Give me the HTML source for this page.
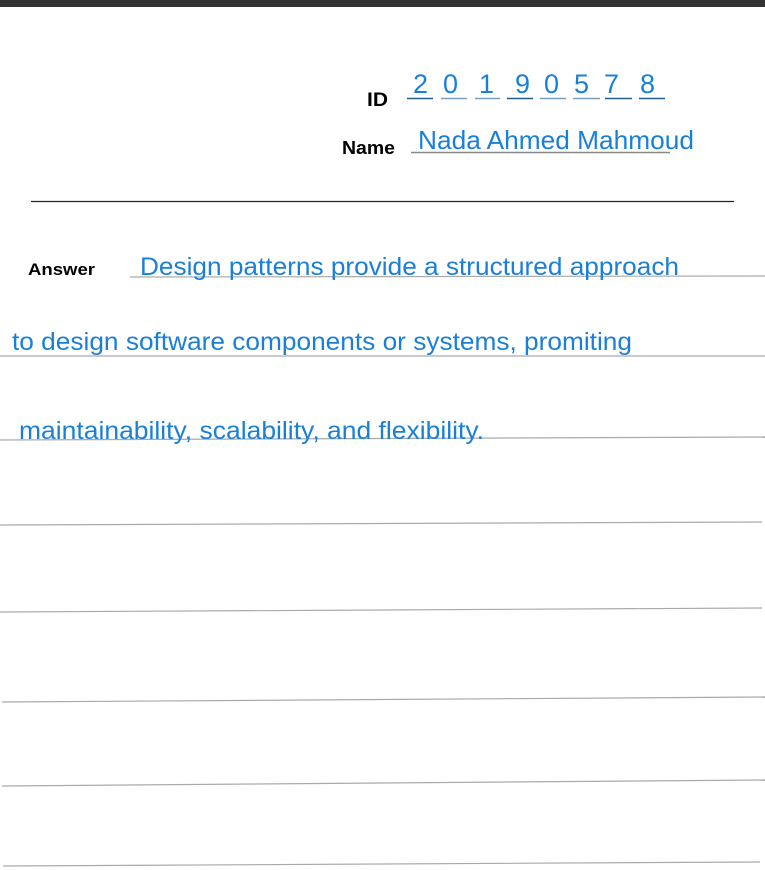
<!DOCTYPE html>
<html><head><meta charset="utf-8"><style>
html,body{margin:0;padding:0;background:#fff;width:765px;height:870px;overflow:hidden}
svg{display:block}
</style></head><body>
<svg width="765" height="870" xmlns="http://www.w3.org/2000/svg" font-family="Liberation Sans, Arial, sans-serif">
<rect x="0" y="0" width="765" height="7" fill="#333"/>
<text x="367" y="106" font-size="19" font-weight="bold" fill="#000" textLength="21" lengthAdjust="spacingAndGlyphs">ID</text>
<g fill="#1a7fd8" font-size="27">
<text x="413" y="93">2</text><text x="443" y="93">0</text><text x="479" y="93">1</text><text x="515" y="93">9</text><text x="544" y="93">0</text><text x="574" y="93">5</text><text x="604" y="93">7</text><text x="640" y="93">8</text>
</g>
<g stroke="#1f5f8a" stroke-width="1.5">
<line x1="407" y1="98.5" x2="433" y2="98.5"/><line x1="441" y1="98.5" x2="467" y2="98.5" stroke="#7aa0b8"/><line x1="475" y1="98.5" x2="500" y2="98.5" stroke="#7aa0b8"/><line x1="507" y1="98.5" x2="533" y2="98.5"/><line x1="540" y1="98.5" x2="566" y2="98.5" stroke="#7aa0b8"/><line x1="573" y1="98.5" x2="600" y2="98.5" stroke="#7aa0b8"/><line x1="605" y1="98.5" x2="632" y2="98.5"/><line x1="639" y1="98.5" x2="665" y2="98.5"/>
</g>
<text x="342" y="154" font-size="18" font-weight="bold" fill="#000" textLength="53" lengthAdjust="spacingAndGlyphs">Name</text>
<line x1="411" y1="152.5" x2="670" y2="152.5" stroke="#888" stroke-width="1.5"/>
<text x="418" y="149" font-size="26" fill="#1a7fd8" textLength="276" lengthAdjust="spacingAndGlyphs">Nada Ahmed Mahmoud</text>
<line x1="31" y1="201.5" x2="734" y2="201.5" stroke="#222" stroke-width="1.2"/>
<text x="28" y="275" font-size="17" font-weight="bold" fill="#000" textLength="67" lengthAdjust="spacingAndGlyphs">Answer</text>
<g stroke="#aaa" stroke-width="1.2">
<line x1="130" y1="277" x2="765" y2="276"/>
<line x1="0" y1="356" x2="765" y2="356"/>
<line x1="0" y1="440" x2="765" y2="437"/>
<line x1="0" y1="525" x2="762" y2="522"/>
<line x1="0" y1="612" x2="762" y2="608"/>
<line x1="2" y1="702" x2="765" y2="697"/>
<line x1="2" y1="786" x2="765" y2="780"/>
<line x1="3" y1="866" x2="760" y2="862"/>
</g>
<g fill="#1a7fd8" font-size="25">
<text x="140" y="275" textLength="539" lengthAdjust="spacingAndGlyphs">Design patterns provide a structured approach</text>
<text x="12" y="350" textLength="620" lengthAdjust="spacingAndGlyphs">to design software components or systems, promiting</text>
<text x="19" y="439" textLength="465" lengthAdjust="spacingAndGlyphs">maintainability, scalability, and flexibility.</text>
</g>
</svg>
</body></html>
